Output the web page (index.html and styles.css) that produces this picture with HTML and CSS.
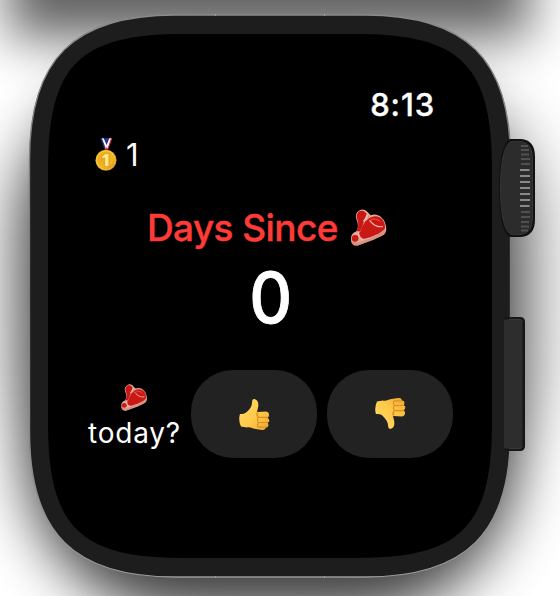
FILE: index.html
```
<!DOCTYPE html>
<html lang="en">
<head>
<meta charset="utf-8">
<title>Days Since</title>
<link rel="stylesheet" href="styles.css">
</head>
<body>
<svg class="hardware" viewBox="0 0 560 596" aria-hidden="true">
  <defs>
    <filter id="soft" x="-30%" y="-100%" width="160%" height="300%"><feGaussianBlur stdDeviation="26"/></filter>
    <filter id="wide" x="-30%" y="-30%" width="160%" height="160%"><feGaussianBlur stdDeviation="29"/></filter>
    <linearGradient id="rim" x1="0" y1="0" x2="0" y2="1"><stop stop-color="#8a8a8a"/><stop offset=".5" stop-color="#777"/><stop offset="1" stop-color="#999"/></linearGradient>
    <path id="body" d="M29.500 160C29.500 59 74 15 175 15H365C466 15 510.500 59 510.500 160V432C510.500 533 466 577 365 577H175C74 577 29.500 533 29.500 432Z"/>
  </defs>
  <rect width="560" height="596" fill="#fff"/>
  <rect x="8" y="-80" width="522" height="118" fill="#000" opacity=".62" filter="url(#soft)"/>
  <rect x="0" y="70" width="560" height="420" rx="150" fill="#000" opacity=".16" filter="url(#wide)"/>
  <rect x="26" y="75" width="490" height="540" rx="160" fill="#000" opacity=".75" filter="url(#wide)"/>
  <use href="#body" fill="#1d1d1d" stroke="url(#rim)" stroke-width="1.4"/>
  <path d="M215.500 14v2M324.500 14v2M215.500 576v2M324.500 576v2" stroke="#aaa" stroke-width=".7"/>
  <path d="M48 170C48 65 79 34 184 34H356C461 34 492 65 492 170V422C492 527 461 558 356 558H184C79 558 48 527 48 422Z" fill="#000"/>
  <path d="M510 139H521Q535 140 535 157V219Q535 236 521 237H510C502 234 499 213 499 188S502 143 510 139Z" fill="#111"/>
  <path d="M511 141.500H521Q532.500 143 532.500 158V218Q532.500 233 521 234.500H511C503 230 500.500 210 500.500 188S503 146 511 141.500Z" fill="#2c2c2c" stroke="#414141" stroke-width=".6"/>
  <g fill="none" stroke-width="2">
    <path d="M521 146h7M521 150h8M521 154.500h8M521 159h9M521 164h9" stroke="#505050"/>
    <path d="M520 170h9.500M520 176h10M520 182h10M520 188h10M520 194h10M520 200h10M520 206h9.500" stroke="#8a8a8a"/>
    <path d="M521 212h9M521 217h9M521 222h8M521 226.500h8M521 230.500h7" stroke="#505050"/>
  </g>
  <path d="M504 317H520Q525 317 525 322V446Q525 451 520 451H504Z" fill="#171717"/>
  <path d="M504 319.500H520.500L522.500 322V446L520.500 448.500H504Z" fill="#2d2d2d"/>
  <path d="M509 319.500H520.500L522.500 322M509 448.500H520.500L522.500 446" fill="none" stroke="#454545" stroke-width=".7"/>
</svg>

<svg class="symbols" aria-hidden="true">
  <defs>
    <linearGradient id="skin" x1="0" y1="0" x2="1" y2="1"><stop stop-color="#ffdc68"/><stop offset=".55" stop-color="#ffca4b"/><stop offset="1" stop-color="#eea62d"/></linearGradient>
    <radialGradient id="gold" cx=".38" cy=".38" r=".7"><stop stop-color="#e9a51f"/><stop offset=".65" stop-color="#f2b728"/><stop offset="1" stop-color="#c37b12"/></radialGradient>
    <symbol id="steak" viewBox="0 0 36 36">
      <path d="M9 1.500C12-.5 15 .5 17 3L20 6C25 4 30 6 33 11C36 17 36 22 33 25L23 30L9 35C4 37 .8 34 1 29C1 25 3 23 6 22C8 19 8 16 7 12C5 8 5 4 9 1.500Z" fill="#e3aa9b"/>
      <path d="M1.500 30L7 33C17 30 28 26 34 20C36 22 33 25 29 27L9 35C4 37 .5 33 1.500 30Z" fill="#d78f80"/>
      <path d="M9 2.200C12 .5 16 3 16.500 6C13 11 13 17 9.500 22L6.500 21.500Q9 15 7.500 11C6 8 6 4.500 9 2.200Z" fill="#c91713"/>
      <path d="M18 6Q19 9 15 12Q12 16 10 22C7 25 9 29.500 14 29C21 27.500 31 23.500 34 19C34.800 12 30 6.500 24 7C21 7.500 18.500 8.500 17.500 10Z" fill="#ca1915"/>
      <circle cx="5" cy="28.500" r="3.300" fill="#c91b16"/>
      <path d="M8 23C9 27 10 29 13 30M19 11C23 16 27 18 32 17M16.500 5.500Q16 9 13 12" fill="none" stroke="#efc5b8" stroke-width="1.100"/>
      <path d="M20 10.500Q26 8.500 29 12" fill="none" stroke="#ef4339" stroke-width="1.200"/>
    </symbol>
    <symbol id="thumb" viewBox="0 0 32 33">
      <path d="M1 16C4 16 6 16 8 14C11 11 13.500 8 13.500 4C13.500 1 15 0 17 1C20 2 20.500 6 19.500 10L18.500 14L28 13.500Q31 14 31 17Q31 19 29.500 20Q32 21 31 24Q30 25 29.500 25Q31 27 30 29Q29 30 28 30Q27 33 24 32.500L17 31.500C13 31 12 29 8 30L2 29Q-1 22 1 16Z" fill="url(#skin)"/>
      <path d="M20 14.500Q18 17 20 19.500H30M20 19.500Q18 22 20 24.800H29.500M20 24.800Q18 27.500 20 29.500H28" fill="none" stroke="#dc8f22" stroke-width="1.100"/>
      <path d="M18.500 13.500Q17 17 19 19" fill="none" stroke="#e7a131" stroke-width="1"/>
    </symbol>
    <symbol id="medal" viewBox="0 0 24 35">
      <path d="M5.500 0H18L13.500 12H10Z" fill="#17368c"/>
      <path d="M9 0L12 7L15 0H18L13.500 12H10.500Z" fill="#e3262d"/>
      <path d="M7.200 0H9L12.500 8L11.500 11ZM15 0H16.700L13 11L11.800 8Z" fill="#fff"/>
      <path d="M10.500 0H13.800L12.200 5Z" fill="#193d9c"/>
      <circle cx="11.500" cy="23" r="11" fill="url(#gold)"/>
      <circle cx="11.500" cy="23" r="9.700" fill="none" stroke="#ffd64d" stroke-width=".7"/>
      <path d="M7 19L11 16H14.500V29.500H10V20.500L7.500 21.500Z" fill="#ffe783" stroke="#c88a18" stroke-width=".6"/>
    </symbol>
  </defs>
</svg>

<main class="screen">
  <time class="clock">8:13</time>
  <div class="award"><svg class="medal"><use href="#medal"/></svg><span>1</span></div>
  <h1 class="title"><span class="title-text">Days Since</span><svg class="title-steak"><use href="#steak"/></svg></h1>
  <div class="count"><span>0</span></div>
  <div class="actions">
    <div class="question"><svg class="small-steak"><use href="#steak"/></svg><span>today?</span></div>
    <button class="answer" aria-label="Yes"><svg class="thumb"><use href="#thumb"/></svg></button>
    <button class="answer" aria-label="No"><svg class="thumb down"><use href="#thumb"/></svg></button>
  </div>
</main>
</body>
</html>
```
FILE: styles.css
```
* { box-sizing: border-box; }
body { margin: 0; width: 560px; height: 596px; overflow: hidden; background: #fff; color: #fff; font-family: Inter, "Liberation Sans", sans-serif; }
svg { display: block; flex: none; }
.hardware { position: absolute; inset: 0; width: 560px; height: 596px; }
.symbols { position: absolute; width: 0; height: 0; }
.screen { position: relative; width: 444px; height: 524px; margin: 34px 0 0 48px; padding-top: 51px; display: flex; flex-direction: column; }
.clock { align-self: flex-end; margin-right: 57px; font-size: 31px; line-height: 40px; font-weight: 500; letter-spacing: .9px; -webkit-text-stroke: .4px #fff; }
.award { display: flex; align-items: center; height: 40px; margin: 10px 0 0 47px; gap: 8px; font-size: 31px; line-height: 42px; }
.medal { width: 23px; height: 34px; }
.title { display: flex; align-items: center; height: 48px; margin: 29px 0 0 99px; gap: 10px; font-size: 37px; line-height: 48px; font-weight: 500; color: #ff3b37; letter-spacing: -.6px; -webkit-text-stroke: .4px #ff3b37; }
.title-steak { width: 39px; height: 37px; margin-top: -2px; }
.title-text { width: 192px; white-space: nowrap; }
.count { display: flex; justify-content: center; height: 80px; margin-top: 6px; padding-left: 2px; font-size: 70px; line-height: 80px; font-weight: 500; -webkit-text-stroke: .8px #fff; }
.count span { transform: scaleX(.95); }
.actions { display: flex; margin: 32px 0 0 37px; height: 88px; }
.question { width: 106px; padding: 14px 0 0 3px; font-size: 28px; line-height: 36px; }
.small-steak { width: 28px; height: 27px; margin-left: 32px; }
.question span { display: block; margin-top: 4px; letter-spacing: .8px; }
.answer { width: 126px; height: 88px; padding: 0; border: 0; border-radius: 42px; background: #222; display: grid; place-items: center; }
.answer + .answer { margin-left: 10px; }
.thumb { width: 31px; height: 33px; }
.down { transform: scaleY(-1); margin-top: -2px; }
```
